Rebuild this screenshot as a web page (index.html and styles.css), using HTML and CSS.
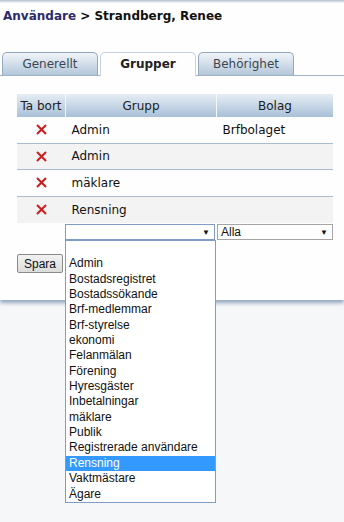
FILE: index.html
```html
<!DOCTYPE html>
<html lang="sv">
<head>
  <meta charset="UTF-8">
  <meta name="viewport" content="width=device-width, initial-scale=1.0">
  <title>Användare</title>
  <link rel="stylesheet" href="styles.css">
</head>
<body>
  <div class="topshade"></div>
  <div class="panel">
    <h1 class="crumb"><span class="crumb-link">Användare</span> &gt; Strandberg, Renee</h1>

    <div class="tabs">
      <div class="tab">Generellt</div>
      <div class="tab active">Grupper</div>
      <div class="tab">Behörighet</div>
    </div>

    <table class="groups">
      <tr>
        <th class="col-del">Ta bort</th>
        <th class="col-group">Grupp</th>
        <th class="col-company">Bolag</th>
      </tr>
      <tr>
        <td class="del"><svg width="11" height="11" viewBox="0 0 11 11"><path d="M1 1L10 10M10 1L1 10" stroke="#d01c1c" stroke-width="2"/></svg></td>
        <td>Admin</td>
        <td>Brfbolaget</td>
      </tr>
      <tr class="alt">
        <td class="del"><svg width="11" height="11" viewBox="0 0 11 11"><path d="M1 1L10 10M10 1L1 10" stroke="#d01c1c" stroke-width="2"/></svg></td>
        <td>Admin</td>
        <td></td>
      </tr>
      <tr>
        <td class="del"><svg width="11" height="11" viewBox="0 0 11 11"><path d="M1 1L10 10M10 1L1 10" stroke="#d01c1c" stroke-width="2"/></svg></td>
        <td>mäklare</td>
        <td></td>
      </tr>
      <tr class="alt last">
        <td class="del"><svg width="11" height="11" viewBox="0 0 11 11"><path d="M1 1L10 10M10 1L1 10" stroke="#d01c1c" stroke-width="2"/></svg></td>
        <td>Rensning</td>
        <td></td>
      </tr>
    </table>

    <div class="addrow">
      <div class="select focus"><span class="value"></span><span class="arrow">▼</span></div>
      <div class="select company"><span class="value">Alla</span><span class="arrow">▼</span></div>

      <ul class="options">
        <li>&nbsp;</li>
        <li>Admin</li>
        <li>Bostadsregistret</li>
        <li>Bostadssökande</li>
        <li>Brf-medlemmar</li>
        <li>Brf-styrelse</li>
        <li>ekonomi</li>
        <li>Felanmälan</li>
        <li>Förening</li>
        <li>Hyresgäster</li>
        <li>Inbetalningar</li>
        <li>mäklare</li>
        <li>Publik</li>
        <li>Registrerade användare</li>
        <li class="selected">Rensning</li>
        <li>Vaktmästare</li>
        <li>Ägare</li>
      </ul>
    </div>

    <button class="save">Spara</button>
  </div>
</body>
</html>
```

FILE: styles.css
```css
html, body {
  min-height: 522px;
}
body {
  margin: 0;
  background: #f6f7f9;
  font-family: "DejaVu Sans", Verdana, sans-serif;
  font-size: 12px;
  color: #111;
}
.topshade {
  height: 3px;
  background: linear-gradient(#aebfd1, #fefefe);
}
.panel {
  position: relative;
  z-index: 1;
  background: #fefefe;
  padding: 5px 0 27px 0;
  box-shadow: 0 3px 4px rgba(80, 110, 150, 0.6);
}
.crumb {
  margin: 0;
  padding-left: 3px;
  font-size: 12px;
  line-height: 16px;
  font-weight: bold;
  color: #111;
}
.crumb-link {
  color: #2b2b6b;
}
.tabs {
  display: flex;
  gap: 2px;
  margin-top: 28px;
  padding-left: 2px;
  border-bottom: 1px solid #9fb3c7;
  height: 23px;
}
.tab {
  width: 94px;
  height: 22px;
  line-height: 22px;
  text-align: center;
  color: #3c4650;
  border: 1px solid #93a9bf;
  border-bottom: none;
  border-radius: 5px 5px 0 0;
  background: linear-gradient(#f0f4f8, #b4c7da);
}
.tab.active {
  height: 23px;
  background: #fefefe;
  font-weight: bold;
  color: #222;
  border-color: #c6d3df;
}
.groups {
  margin: 18px 0 0 17px;
  width: 316px;
  border-collapse: collapse;
}
.groups th {
  height: 23px;
  padding: 0;
  font-weight: normal;
  text-align: center;
  color: #1c1c1c;
  background: linear-gradient(#e6edf4, #a8c0d7);
  border-left: 1px solid #f4f7fa;
}
.groups th:first-child {
  border-left: none;
}
.col-del {
  width: 48px;
}
.col-group {
  width: 150px;
}
.groups td {
  height: 25.5px;
  padding: 0 0 0 6px;
  border-bottom: 1px solid #a9bccf;
}
.groups tr.alt td {
  background: #f3f3f3;
}
.groups tr.last td {
  border-bottom: none;
  height: 26.5px;
}
.groups td.del {
  padding: 0;
  text-align: center;
}
.groups td.del svg {
  display: block;
  margin: 0 auto;
}
.addrow {
  position: relative;
  z-index: 2;
  display: flex;
  gap: 2px;
  margin: 1px 0 0 65px;
  height: 16px;
}
.select {
  box-sizing: border-box;
  height: 16px;
  display: flex;
  align-items: center;
  justify-content: space-between;
  padding: 0 4px 0 3px;
  border: 1px solid #a5a5a5;
  background: #fff;
  font-family: "Liberation Sans", Arial, sans-serif;
  font-size: 12px;
}
.select.focus {
  width: 150px;
  border-color: #7f9dc6;
}
.select.company {
  width: 116px;
}
.arrow {
  font-size: 8px;
  color: #111;
}
.options {
  position: absolute;
  z-index: 3;
  top: 16px;
  left: 0;
  width: 151px;
  box-sizing: border-box;
  margin: 0;
  padding: 0;
  list-style: none;
  border: 1px solid #7f9dc6;
  background: #fff;
  font-family: "Liberation Sans", Arial, sans-serif;
  font-size: 12px;
  color: #111;
}
.options li {
  height: 15.35px;
  line-height: 15.35px;
  padding-left: 3px;
  white-space: nowrap;
}
.options li.selected {
  background: #3399ff;
  color: #fff;
}
.save {
  display: block;
  margin: 14px 0 0 17px;
  width: 46px;
  height: 19px;
  padding: 0;
  font-family: "Liberation Sans", Arial, sans-serif;
  font-size: 12px;
  color: #111;
  border: 1px solid #8a8a8a;
  border-radius: 2px;
  background: linear-gradient(#f2f2f2, #dcdcdc);
}
```
